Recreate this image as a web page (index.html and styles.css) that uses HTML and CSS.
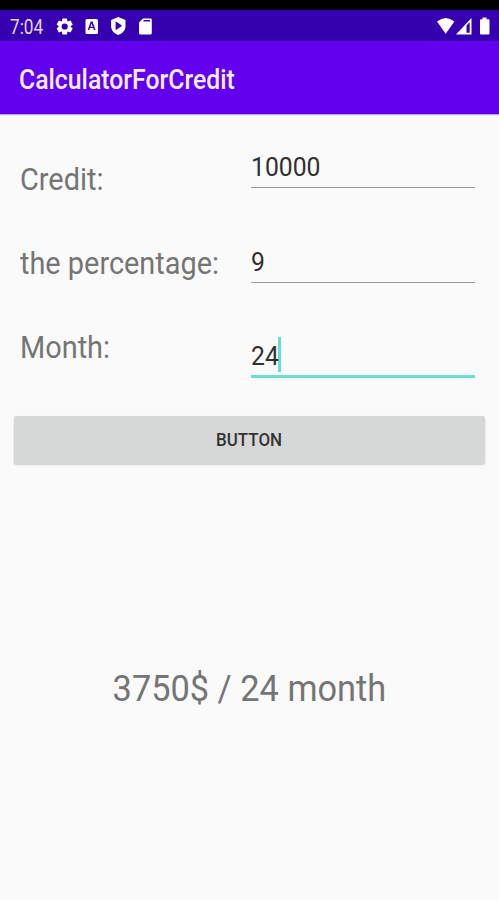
FILE: index.html
```html
<!DOCTYPE html>
<html lang="en">
<head>
<meta charset="utf-8">
<title>CalculatorForCredit</title>
<link rel="stylesheet" href="styles.css">
</head>
<body>
<header class="status">
  <span class="time">7:04</span>
  <svg class="status-icons" width="100" height="22" viewBox="0 0 100 22" fill="#fff">
    <g transform="translate(12.7 11.5)">
      <path id="tooth" d="M-2.200-8h4.400l.6 3h-5.600zM-2.200 8h4.400l.6-3h-5.600z"/>
      <use href="#tooth" transform="rotate(60)"/>
      <use href="#tooth" transform="rotate(120)"/>
      <circle r="4.500" fill="none" stroke="#fff" stroke-width="2.800"/>
    </g>
    <path fill-rule="evenodd" d="M35 4h9.500q1.500 0 1.500 1.500v12q0 1.500-1.500 1.500H35q-1.500 0-1.500-1.500v-12Q33.500 4 35 4zM38.700 6.500 35.700 15h1.600l.6-2h3.400l.6 2h1.700L40.500 6.500zM39.600 8.500l1.200 3.200h-2.400z"/>
    <path fill-rule="evenodd" d="M66.300 2l7.200 3v6c0 4-2.700 7.500-7.200 9-4.500-1.500-7.200-5-7.200-9V5zM63.600 6.200v9l6.600-4.500z"/>
    <path fill-rule="evenodd" d="M91 3.500h7.500q1.300 0 1.300 1.300V18q0 1.500-1.500 1.500h-9.800q-1.500 0-1.500-1.500V7.500zM91.500 5v1.500h6.500V5z"/>
  </svg>
  <svg class="system-icons" width="56" height="22" viewBox="0 0 56 22" fill="#fff">
    <path d="M1 6.500Q9.700-.5 18.400 6.500L9.700 18.700z"/>
    <path fill-rule="evenodd" d="M20 19.500 35.500 3V19.500zM30.500 10.500v7.300h3.200V7.300z"/>
    <path d="M46.500 2.500h4V4.300h2q1 0 1 1v13.200q0 1-1 1h-7.500q-1 0-1-1V5.300q0-1 1-1h1.500z"/>
  </svg>
</header>
<div class="appbar"><h1 class="title">CalculatorForCredit</h1></div>
<main class="content">
  <div class="form">
    <div class="labels">
      <div class="label"><span class="credit">Credit:</span></div>
      <div class="label"><span class="percentage">the percentage:</span></div>
      <div class="label"><span class="month">Month:</span></div>
    </div>
    <div class="fields">
      <div class="field"><span class="value">10000</span></div>
      <div class="field"><span class="value">9</span></div>
      <div class="field focused"><span class="value">24</span><i class="caret"></i></div>
    </div>
  </div>
  <button class="button"><span class="button-text">BUTTON</span></button>
  <p class="result"><span class="result-text">3750$ / 24 month</span></p>
</main>
</body>
</html>
```
FILE: styles.css
```css
* { box-sizing: border-box; }
body {
  margin: 0;
  height: 900px;
  overflow: hidden;
  background: #fafafa;
  color: #757575;
  font-family: Roboto, sans-serif;
}
span, h1 { display: inline-block; white-space: nowrap; transform-origin: 0 50%; }
.status {
  height: 41px;
  display: flex;
  align-items: flex-start;
  padding: 5px 7px 0 10px;
  border-top: 10px solid #000;
  background: #3600b0;
}
.time { width: 42px; font-size: 20px; line-height: 24px; color: #e3d9f5; transform: scaleX(.86); }
.status-icons { overflow: visible; }
.system-icons { margin-left: auto; }
.appbar {
  height: 73px;
  padding: 0 19px;
  background: #6200ee;
  box-shadow: 0 1px 1px rgba(60, 30, 110, .35);
}
.title {
  margin: 0;
  font-size: 27px;
  line-height: 78px;
  font-weight: 500;
  color: #f4edff;
  transform: scaleX(.918);
}
.form { display: flex; height: 302px; padding-left: 20px; }
.labels { width: 231px; padding-top: 24px; }
.label { height: 84px; font-size: 31.500px; line-height: 84px; }
.label span { transform: scaleX(.917); }
.fields { width: 224px; padding-top: 24px; }
.field {
  display: flex;
  align-items: center;
  height: 50px;
  margin-bottom: 45px;
  padding-top: 8px;
  border-bottom: 1px solid #999;
  font-size: 26px;
  color: #303030;
}
.field .value { transform: scaleX(.95); }
.focused { border-bottom: 3px solid #68dfcf; }
.caret { width: 3px; height: 35px; margin: -2px 0 0 -2px; background: #68dfcf; }
.button {
  display: block;
  width: 471px;
  height: 48px;
  margin: 0 14px;
  padding: 0;
  border: 0;
  border-radius: 2px;
  background: #d6d7d7;
  box-shadow: 0 1px 2px rgba(0, 0, 0, .18);
  font: 500 18px/48px Roboto, sans-serif;
  color: #333;
}
.button-text { transform: scaleX(.94); transform-origin: 50% 50%; }
.result { margin: 200px 0 0; text-align: center; font-size: 37px; line-height: 50px; }
.result-text { transform: scaleX(.928); transform-origin: 50% 50%; }
```
